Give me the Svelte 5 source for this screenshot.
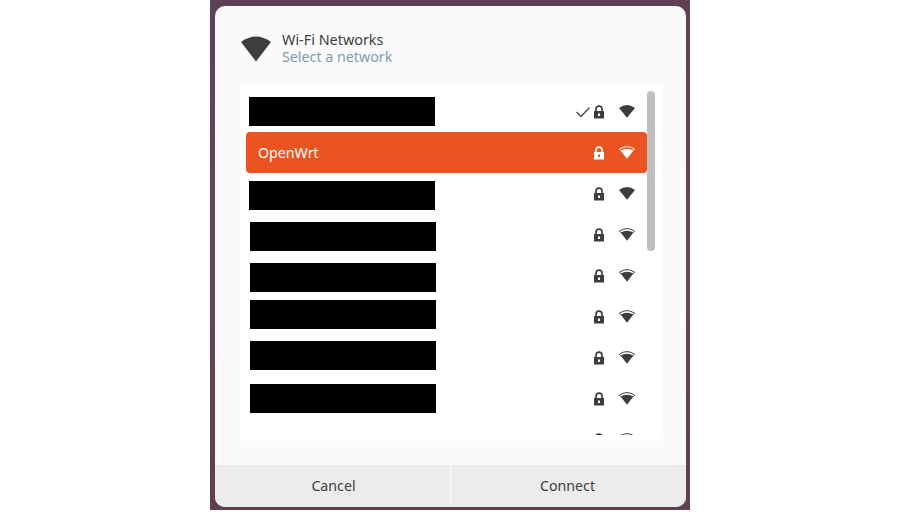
<script>
  const networks = [
    { name: '', current: true, signal: 'full', boxX: 3, boxY: 6 },
    { name: 'OpenWrt', selected: true, signal: 'good' },
    { name: '', signal: 'full', boxX: 3, boxY: 8 },
    { name: '', signal: 'good', boxX: 4, boxY: 8 },
    { name: '', signal: 'good', boxX: 4, boxY: 8 },
    { name: '', signal: 'good', boxX: 4, boxY: 4 },
    { name: '', signal: 'good', boxX: 4, boxY: 4 },
    { name: '', signal: 'good', boxX: 4, boxY: 6 },
    { name: '', signal: 'good' }
  ];
</script>

<div class="desktop">
  <div class="dialog">
    <header class="head">
      <svg class="head-icon" width="32" height="26" viewBox="0 0 32 26">
        <path d="M1 6 Q16 -5 31 6 L16 25.5 Z" fill="#3d3d3d" />
      </svg>
      <div class="titles">
        <div class="title">Wi-Fi Networks</div>
        <div class="subtitle">Select a network</div>
      </div>
    </header>

    <div class="list">
      <div class="scroller">
        {#each networks as net}
          <div class="row" class:selected={net.selected}>
            <span class="name">{net.name}</span>
            {#if net.current}
              <svg class="check" width="16" height="12" viewBox="0 0 16 12">
                <path d="M1.5 6 L6 10.5 L14.5 1.5" fill="none" stroke="#4a4a4a" stroke-width="1.3" />
              </svg>
            {/if}
            <svg class="lock" width="12" height="14" viewBox="0 0 12 14">
              <path d="M1 6 H11 V13.5 H1 Z M5 8.5 V11 H7 V8.5 Z" fill="currentColor" fill-rule="evenodd" />
              <path d="M3 6.5 V4.2 Q3 1.2 6 1.2 Q9 1.2 9 4.2 V6.5" fill="none" stroke="currentColor" stroke-width="1.7" />
            </svg>
            <svg class="wifi" width="16" height="13" viewBox="0 0 16 13">
              {#if net.signal === 'full'}
                <path d="M0 3 Q8 -3 16 3 L8 12.8 Z" fill="currentColor" />
              {:else}
                <path d="M1.6 4.4 Q8 1 14.4 4.4 L8 12.8 Z" fill="currentColor" />
                <path d="M1.6 4.6 L0.4 3.2 Q8 -2 15.6 3.2 L14.4 4.6" fill="none" stroke="currentColor" stroke-width="1" />
              {/if}
            </svg>
            {#if net.boxX !== undefined}
              <div class="redact" style="left: {net.boxX}px; top: {net.boxY}px"></div>
            {/if}
          </div>
        {/each}
        <div class="thumb"></div>
      </div>
    </div>

    <footer class="actions">
      <button class="action">Cancel</button>
      <button class="action">Connect</button>
    </footer>
  </div>
</div>

<style>
  :global(body) {
    background: #fff;
  }

  .desktop {
    width: 480px;
    height: 510px;
    margin-left: 210px;
    padding: 6px 4px 3px 5px;
    box-sizing: border-box;
    background: linear-gradient(180deg, #5f4155 0%, #634759 50%, #5f3f50 100%);
    font-family: "Noto Sans", sans-serif;
    overflow: hidden;
  }

  .dialog {
    display: flex;
    flex-direction: column;
    height: 501px;
    background: #fafafa;
    border-radius: 10px;
    overflow: hidden;
  }

  .head {
    display: flex;
    align-items: center;
    gap: 10px;
    height: 79px;
    padding: 6px 0 0 25px;
    box-sizing: border-box;
  }

  .head-icon {
    flex: none;
  }

  .titles {
    margin-top: -1px;
    line-height: 17px;
  }

  .title {
    color: #3d3d3d;
    font-size: 14.4px;
  }

  .subtitle {
    color: #7f9cae;
    font-size: 14.25px;
  }

  .list {
    margin: 0 25px 0 25px;
    height: 356px;
    padding: 6px 0;
    box-sizing: border-box;
    background: #fff;
    border-radius: 5px;
  }

  .scroller {
    position: relative;
    height: 344px;
    overflow: hidden;
  }

  .row {
    position: relative;
    display: flex;
    align-items: center;
    height: 41px;
    margin: 0 14px 0 6px;
    padding: 0 12px;
    box-sizing: border-box;
    color: #3d3d3d;
    font-size: 14.2px;
    border-radius: 4px;
  }

  .row.selected {
    background: #e95420;
    color: #fff;
  }

  .name {
    flex: 1;
  }

  .check {
    margin-right: 2px;
  }

  .lock {
    margin-right: 14px;
  }

  .wifi {
    flex: none;
    margin-top: -1px;
  }

  .redact {
    position: absolute;
    width: 186px;
    height: 29px;
    background: #000;
  }

  .thumb {
    position: absolute;
    top: 0;
    left: 407px;
    width: 8px;
    height: 160px;
    background: #c0c0c0;
    border-radius: 4px;
  }

  .actions {
    display: flex;
    margin-top: 24px;
    flex: 1;
    gap: 1px;
  }

  .action {
    flex: 1 1 0;
    box-sizing: border-box;
    border: none;
    padding: 0 0 2px 2px;
    background: #ececec;
    color: #3d3d3d;
    font: inherit;
    font-size: 14.2px;
  }

  .action:last-child {
    padding: 0 2px 2px 0;
  }
</style>
